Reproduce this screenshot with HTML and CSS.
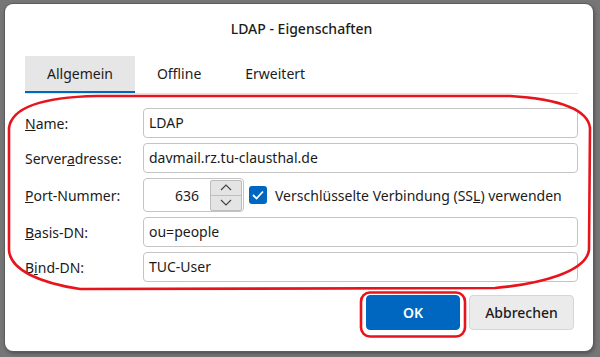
FILE: index.html
```html
<!DOCTYPE html>
<html lang="de">

<head>
    <meta charset="UTF-8">
    <title>LDAP - Eigenschaften</title>
    <link rel="stylesheet" href="styles.css">
</head>

<body>

    <!-- Dialogfenster -->
    <div class="dialog">
        <div class="title">LDAP - Eigenschaften</div>

        <div class="tabs">
            <div class="tab active">Allgemein</div>
            <div class="tab">Offline</div>
            <div class="tab">Erweitert</div>
        </div>

        <div class="form">
            <label class="lbl"><u>N</u>ame:</label>
            <div class="field">LDAP</div>

            <label class="lbl">Server<u>a</u>dresse:</label>
            <div class="field">davmail.rz.tu-clausthal.de</div>

            <label class="lbl"><u>P</u>ort-Nummer:</label>
            <div class="port-row">
                <div class="spin">
                    <span class="spin-value">636</span>
                    <div class="spin-btns">
                        <div class="spin-btn">
                            <svg width="12" height="7" viewBox="0 0 12 7"><path d="M1 6 L6 1 L11 6" fill="none" stroke="#444" stroke-width="1.2"/></svg>
                        </div>
                        <div class="spin-btn">
                            <svg width="12" height="7" viewBox="0 0 12 7"><path d="M1 1 L6 6 L11 1" fill="none" stroke="#444" stroke-width="1.2"/></svg>
                        </div>
                    </div>
                </div>
                <div class="check">
                    <svg width="12" height="10" viewBox="0 0 12 10"><path d="M1 5 L4.5 8.5 L11 1.5" fill="none" stroke="#fff" stroke-width="1.8"/></svg>
                </div>
                <span class="check-label">Verschlüsselte Verbindung (SS<u>L</u>) verwenden</span>
            </div>

            <label class="lbl"><u>B</u>asis-DN:</label>
            <div class="field">ou=people</div>

            <label class="lbl">B<u>i</u>nd-DN:</label>
            <div class="field">TUC-User</div>
        </div>

        <div class="buttons">
            <button class="btn btn-primary">OK</button>
            <button class="btn">Abbrechen</button>
        </div>
    </div>

    <!-- rote Markierungen -->
    <svg class="marks" width="600" height="357" viewBox="0 0 600 357">
        <path d="M97 96 L510 96 C560 99 588 110 590 128 L589 250 C586 272 540 284 495 288 L80 289 C40 283 10 270 9 250 L9 128 C12 105 50 97 97 96 Z" fill="none" stroke="#e8141c" stroke-width="2.6"/>
        <rect x="361" y="292.5" width="104" height="44" rx="9" fill="none" stroke="#e8141c" stroke-width="2.6"/>
    </svg>

</body>

</html>
```

FILE: styles.css
```css
body {
    margin: 0;
    height: 357px;
    box-sizing: border-box;
    padding: 4px 7px 6px 5px;
    background: #767676;
    font-family: "Noto Sans", "Open Sans", sans-serif;
    font-size: 14px;
    color: #1b1b1b;
    position: relative;
}

/* Dialog */
.dialog {
    height: 100%;
    background: white;
    border-radius: 8px;
    padding: 0 15px 0 20px;
    box-sizing: border-box;
    box-shadow: 0 0 0 1px #5c5c5c, 1px 2px 4px rgba(0, 0, 0, 0.4);
}

.title {
    text-align: center;
    padding-top: 15px;
    line-height: 20px;
    height: 37px;
    font-weight: 500;
}

/* Reiter */
.tabs {
    display: flex;
    border-bottom: 1px solid #e3e3e3;
}

.tab {
    height: 35px;
    line-height: 35px;
    padding: 0 22px;
    border-bottom: 2px solid transparent;
}

.tab.active {
    background: #e6e6e6;
    border-bottom-color: #0067c0;
}

/* Formular */
.form {
    margin-top: 14px;
    display: grid;
    grid-template-columns: 118px 1fr;
    row-gap: 5px;
    align-items: center;
}

.field {
    height: 30px;
    line-height: 28px;
    box-sizing: border-box;
    border: 1px solid #c4c4c4;
    border-radius: 4px;
    padding: 0 5px;
}

.port-row {
    display: flex;
    align-items: center;
}

.spin {
    width: 101px;
    height: 34px;
    box-sizing: border-box;
    border: 1px solid #c4c4c4;
    border-radius: 4px;
    display: flex;
    align-items: center;
}

.spin-value {
    flex: 1;
    text-align: right;
    padding-right: 11px;
}

.spin-btns {
    width: 30px;
    margin-right: 1px;
    display: flex;
    flex-direction: column;
    border: 1px solid #bdbdbd;
    border-radius: 2px;
    background: #e4e4e4;
}

.spin-btn {
    height: 14px;
    display: flex;
    align-items: center;
    justify-content: center;
}

.spin-btn + .spin-btn {
    border-top: 1px solid #bdbdbd;
}

.check {
    width: 18px;
    height: 18px;
    margin-left: 5px;
    background: #0067c0;
    border-radius: 3px;
    display: flex;
    align-items: center;
    justify-content: center;
}

.check-label {
    margin-left: 8px;
}

/* Schaltflächen */
.buttons {
    margin-top: 13px;
    display: flex;
    justify-content: flex-end;
    gap: 9px;
    padding-right: 4px;
}

.btn {
    height: 35px;
    font-family: inherit;
    font-size: 14px;
    font-weight: 500;
    color: #1b1b1b;
    background: #ebebeb;
    border: 1px solid #d6d6d6;
    border-radius: 4px;
    width: 105px;
}

.btn-primary {
    width: 94px;
    background: #0067c0;
    border-color: #0067c0;
    color: white;
    font-weight: 600;
}

.marks {
    position: absolute;
    top: 0;
    left: 0;
    pointer-events: none;
}
```
